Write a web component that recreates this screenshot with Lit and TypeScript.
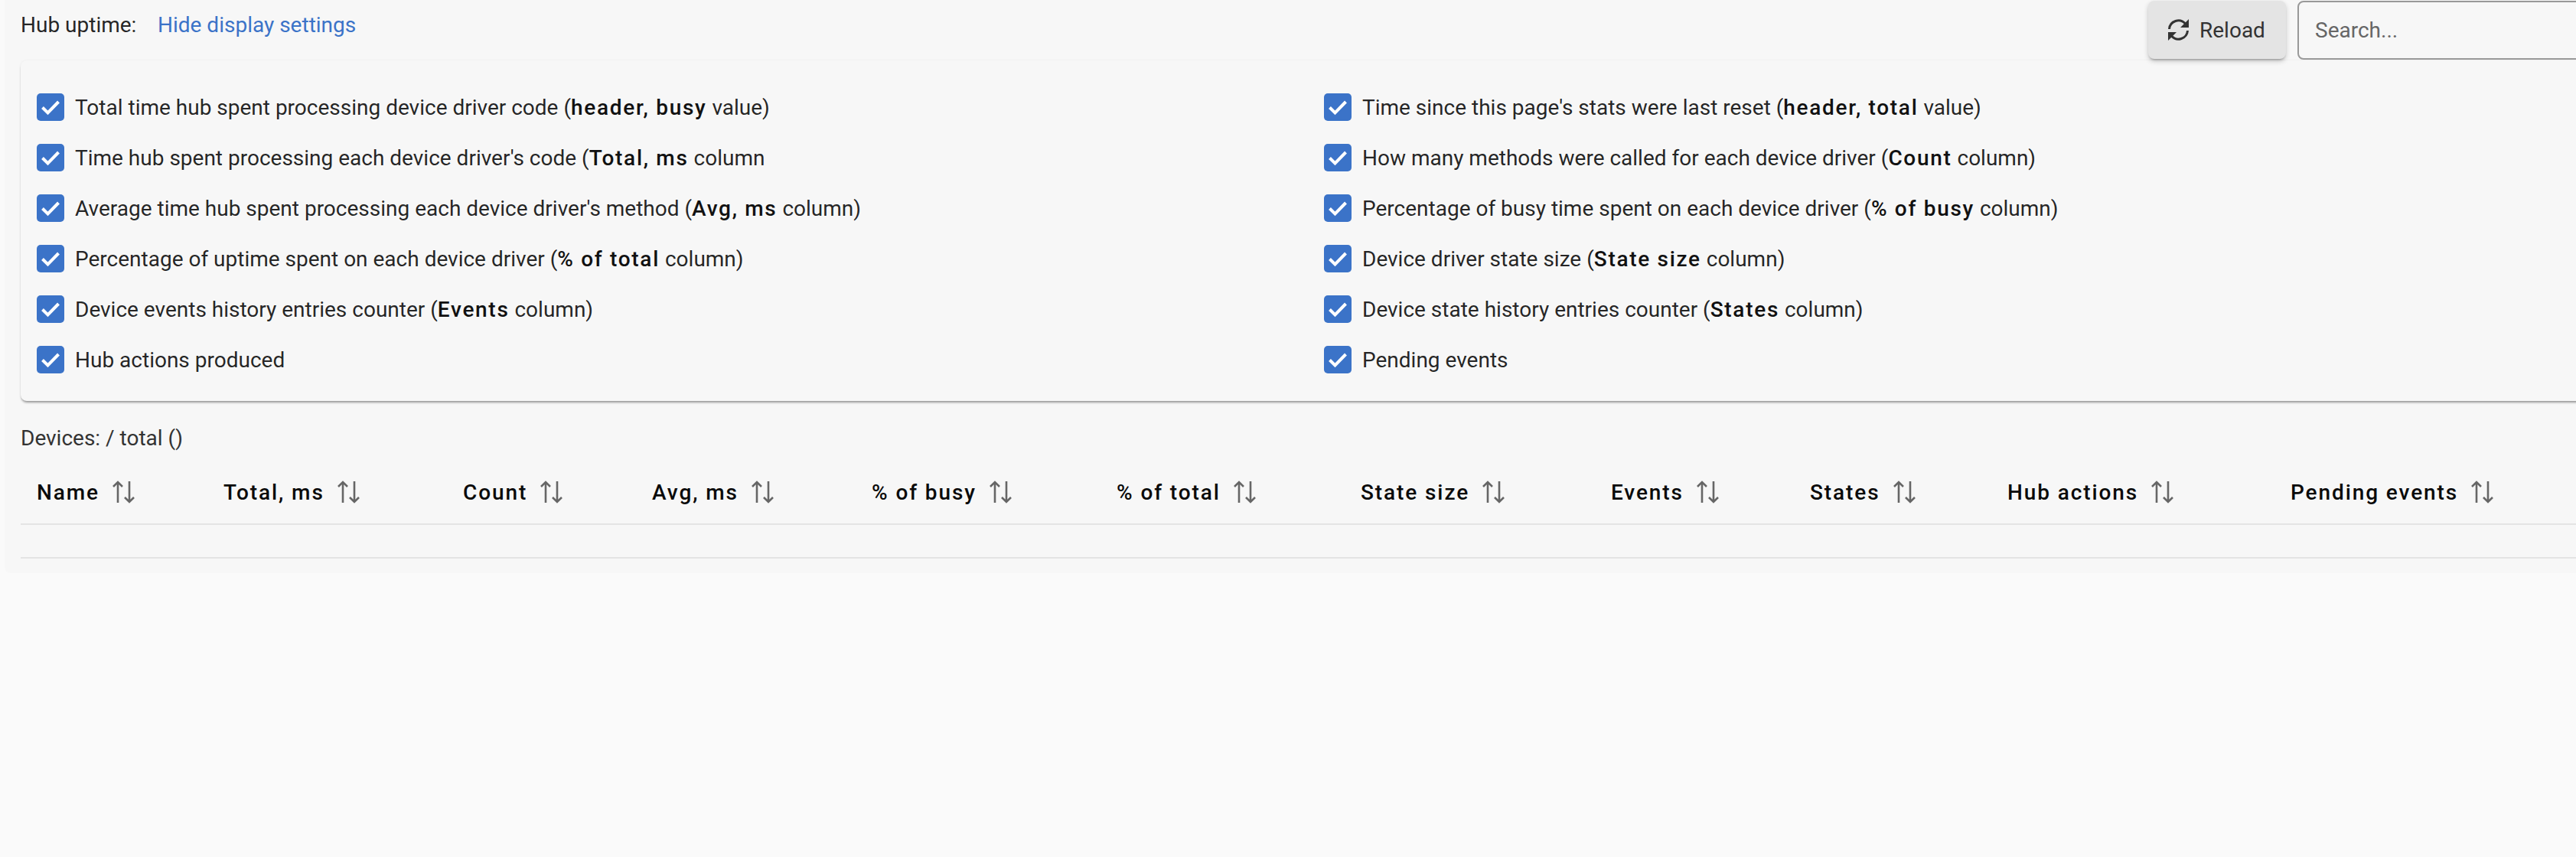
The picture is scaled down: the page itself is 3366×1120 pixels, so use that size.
import { LitElement, html, css, svg } from "lit";
import { customElement } from "lit/decorators.js";

const rows: [any, any][] = [
  [html`Total time hub spent processing device driver code (<b>header, busy</b> value)`, html`Time since this page's stats were last reset (<b>header, total</b> value)`],
  [html`Time hub spent processing each device driver's code (<b>Total, ms</b> column`, html`How many methods were called for each device driver (<b>Count</b> column)`],
  [html`Average time hub spent processing each device driver's method (<b>Avg, ms</b> column)`, html`Percentage of busy time spent on each device driver (<b>% of busy</b> column)`],
  [html`Percentage of uptime spent on each device driver (<b>% of total</b> column)`, html`Device driver state size (<b>State size</b> column)`],
  [html`Device events history entries counter (<b>Events</b> column)`, html`Device state history entries counter (<b>States</b> column)`],
  [html`Hub actions produced`, html`Pending events`],
];
const cols = ["Name", "Total, ms", "Count", "Avg, ms", "% of busy", "% of total", "State size", "Events", "States", "Hub actions", "Pending events"];
const check = svg`<svg class="cb" viewBox="0 0 36 36"><rect width="36" height="36" rx="5" fill="#3b73c8"/><path d="M7.5 18.5 L14.5 25.5 L28.5 11" fill="none" stroke="#fff" stroke-width="4"/></svg>`;
const sort = svg`<svg class="sort" viewBox="0 0 30 30"><path d="M7 29 V2 M1 8 L7 2 L13 8 M22 1 V28 M16 22 L22 28 L28 22" fill="none" stroke="#666" stroke-width="2.6"/></svg>`;

@customElement("app-root")
export class AppRoot extends LitElement {
  static styles = css`
    :host { display: block; width: 3366px; height: 1120px; overflow: hidden; background: #fafafa; font-family: Roboto, sans-serif; font-size: 28px; color: rgba(0,0,0,.87); position: relative; }
    .page { width: 3500px; height: 749px; background: #f7f7f7; margin-left: 6px; padding: 0 0 0 21px; box-sizing: border-box; border-radius: 0 0 0 8px; }
    .top { display: flex; height: 79px; align-items: flex-start; }
    .uptime { margin-top: 16px; line-height: 34px; width: 179px; }
    .link { margin-top: 16px; line-height: 34px; color: #3b73c8; }
    .actions { position: absolute; left: 2807px; top: 1px; display: flex; gap: 15px; }
    .reload { width: 180px; height: 76px; border-radius: 8px; background: #e4e4e4; box-shadow: 0 3px 3px -2px rgba(0,0,0,.3), 0 3px 6px rgba(0,0,0,.2); display: flex; align-items: center; gap: 14px; padding-left: 26px; box-sizing: border-box; color: #333; }
    .reload svg { width: 27px; height: 28px; flex: none; }
    .search { width: 500px; height: 77px; border: 2px solid #999; border-radius: 8px; box-sizing: border-box; padding-left: 21px; display: flex; align-items: center; color: #666; }
    .card { height: 445px; border-radius: 8px 0 0 8px; box-shadow: 0 3px 3px -1px rgba(0,0,0,.38), 0 0 3px rgba(0,0,0,.06); padding: 28px 0 0 21px; box-sizing: border-box; display: grid; grid-template-columns: 1682px 1fr; grid-auto-rows: 66px; }
    .row { display: flex; align-items: center; gap: 14px; height: 66px; white-space: nowrap; }
    .cb { width: 36px; height: 36px; flex: none; }
    b { font-weight: 500; letter-spacing: 1.7px; color: #111; }
    .devices { margin-top: 31px; line-height: 36px; height: 36px; color: #333; }
    .head { display: flex; height: 86px; align-items: center; border-bottom: 2px solid #e4e4e4; margin-top: 9px; box-sizing: border-box; padding: 2px 0 0 21px; }
    .th { display: flex; align-items: center; gap: 17px; font-weight: 500; letter-spacing: 1.9px; color: #0a0a0a; white-space: nowrap; flex: none; }
    .sort { width: 30px; height: 30px; flex: none; }
    .empty { height: 44px; box-sizing: border-box; border-bottom: 2px solid #e4e4e4; }
  `;
  widths = [244, 313, 247, 287, 320, 319, 327, 260, 258, 370, 400];
  render() {
    return html`<div class="page">
      <div class="top">
        <div class="uptime">Hub uptime:</div>
        <div class="link">Hide display settings</div>
      </div>
      <div class="actions">
        <div class="reload"><svg viewBox="0 0 27 28"><path d="M1.500 13 A12 12 0 0 1 22.500 6 M25.500 15 A12 12 0 0 1 4.500 22" fill="none" stroke="#333" stroke-width="3"/><path d="M27 0 V11 H16 Z M0 28 V17 H11 Z" fill="#333"/></svg>Reload</div>
        <div class="search">Search...</div>
      </div>
      <div class="card">
        ${rows.flat().map((r) => html`<div class="row">${check}<span>${r}</span></div>`)}
      </div>
      <div class="devices">Devices: / total ()</div>
      <div class="head">
        ${cols.map((c, i) => html`<div class="th" style="width:${this.widths[i]}px">${c}${sort}</div>`)}
      </div>
      <div class="empty"></div>
    </div>`;
  }
}
